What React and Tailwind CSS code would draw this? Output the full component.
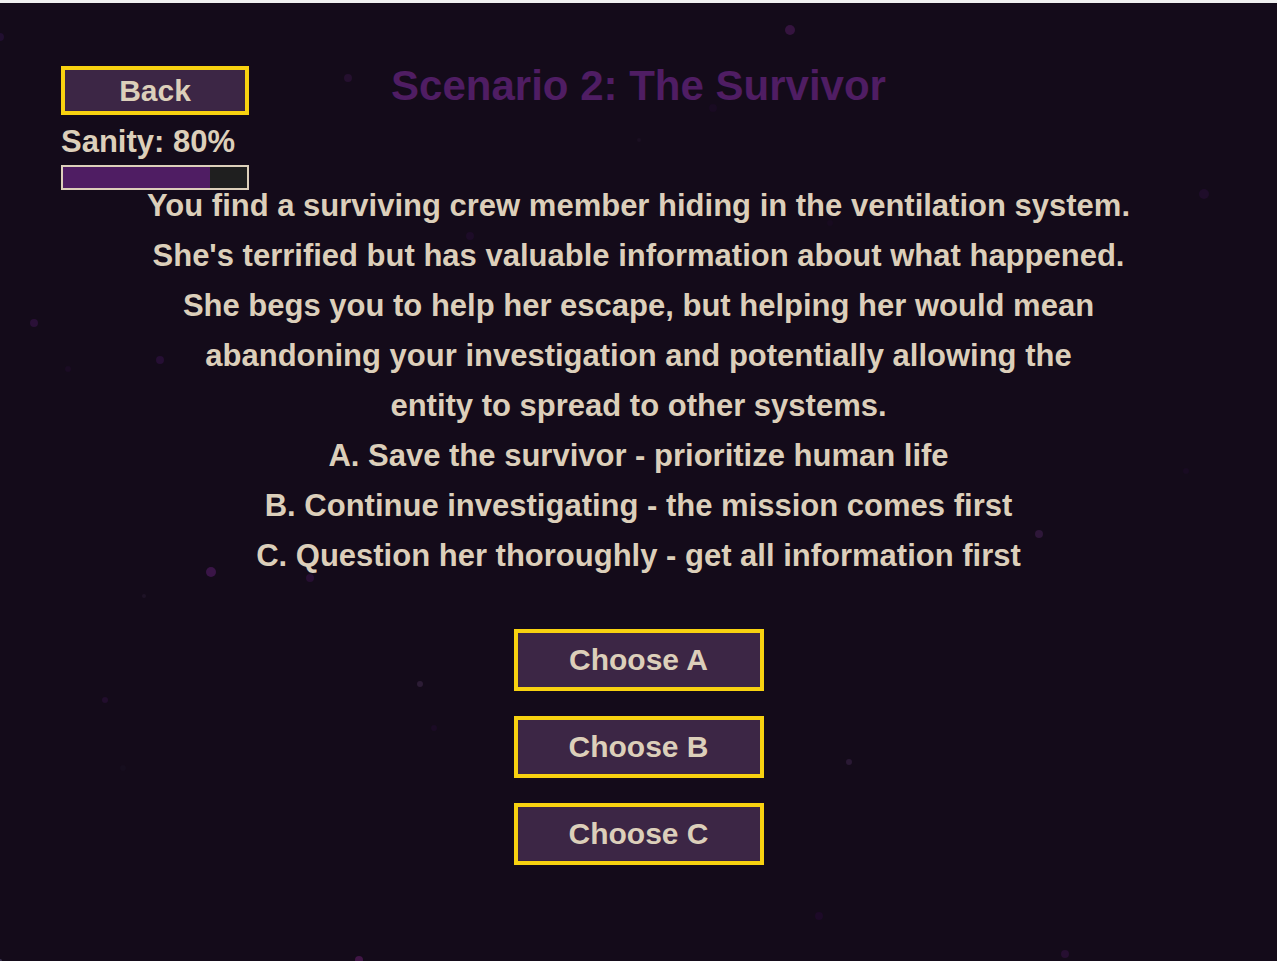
const STORY = [
  "You find a surviving crew member hiding in the ventilation system.",
  "She's terrified but has valuable information about what happened.",
  "She begs you to help her escape, but helping her would mean",
  "abandoning your investigation and potentially allowing the",
  "entity to spread to other systems.",
];

const OPTIONS = [
  { key: "A", text: "Save the survivor - prioritize human life" },
  { key: "B", text: "Continue investigating - the mission comes first" },
  { key: "C", text: "Question her thoroughly - get all information first" },
];

const DUST = [
  [0, 37, 4, "#210f30"],
  [348, 78, 4, "#25102f"],
  [790, 30, 5, "#35143f"],
  [713, 108, 4, "#190b22"],
  [639, 140, 2, "#1b1022"],
  [470, 236, 4, "#1d0c28"],
  [830, 223, 3, "#180b20"],
  [1204, 194, 5, "#1f0d2a"],
  [34, 323, 4, "#2a1037"],
  [68, 369, 3, "#1b0c24"],
  [160, 360, 4, "#260f34"],
  [211, 572, 5, "#3a1547"],
  [310, 578, 4, "#260f32"],
  [144, 596, 2, "#1e1326"],
  [1039, 534, 4, "#2e1739"],
  [1186, 471, 3, "#190b22"],
  [105, 700, 3, "#220e2d"],
  [420, 684, 3, "#2c1c35"],
  [434, 728, 3, "#1b0b25"],
  [123, 768, 3, "#160e1e"],
  [849, 762, 3, "#2a1934"],
  [819, 916, 4, "#1d0a28"],
  [1065, 954, 4, "#260f31"],
  [359, 960, 4, "#401646"],
  [0, 961, 2, "#3b3550"],
];

function Dust() {
  return (
    <svg className="pointer-events-none absolute inset-0 h-full w-full" aria-hidden="true">
      {DUST.map(([x, y, r, fill]) => (
        <circle key={`${x}-${y}`} cx={x} cy={y - 3} r={r} fill={fill} />
      ))}
    </svg>
  );
}

function GameButton({ className, children }) {
  return (
    <button
      type="button"
      className={`flex items-center justify-center border-4 border-[#f8d210] bg-[#3c2645] text-[30px] ${className}`}
    >
      {children}
    </button>
  );
}

function SanityMeter({ value }) {
  return (
    <div className="flex flex-col">
      <span id="sanity" className="flex h-[50px] items-center whitespace-nowrap pt-1">
        Sanity: {value}%
      </span>
      <div
        role="progressbar"
        aria-labelledby="sanity"
        aria-valuenow={value}
        aria-valuemin={0}
        aria-valuemax={100}
        className="h-[25px] border-2 border-[#dccfba] bg-[#1f1f1f]"
      >
        <div className="h-full bg-[#4f1d63]" style={{ width: `${value}%` }} />
      </div>
    </div>
  );
}

export default function App() {
  return (
    <div className="relative flex min-h-screen flex-col overflow-hidden border-t-3 border-[#f0f0f0] bg-[#140b1a] font-['Liberation_Sans',Arial,sans-serif] text-[31px] leading-[50px] font-bold text-[#dccfba]">
      <Dust />
      <header className="relative -mb-[10px] grid grid-cols-[1fr_auto_1fr] items-start px-[61px] pt-[63px]">
        <div className="flex w-[188px] flex-col">
          <GameButton className="h-[49px]">Back</GameButton>
          <SanityMeter value={80} />
        </div>
        <h1 className="text-[42px] leading-[40px] text-[#4f1d63]">Scenario 2: The Survivor</h1>
      </header>
      <main className="relative flex flex-col items-center pt-px text-center">
        <p>
          {STORY.map((line) => (
            <span key={line} className="block">
              {line}
            </span>
          ))}
        </p>
        <ul>
          {OPTIONS.map((option) => (
            <li key={option.key}>
              {option.key}. {option.text}
            </li>
          ))}
        </ul>
        <div className="mt-12 flex flex-col gap-[25px]">
          {OPTIONS.map((option) => (
            <GameButton key={option.key} className="h-[62px] w-[250px]">
              Choose {option.key}
            </GameButton>
          ))}
        </div>
      </main>
    </div>
  );
}
